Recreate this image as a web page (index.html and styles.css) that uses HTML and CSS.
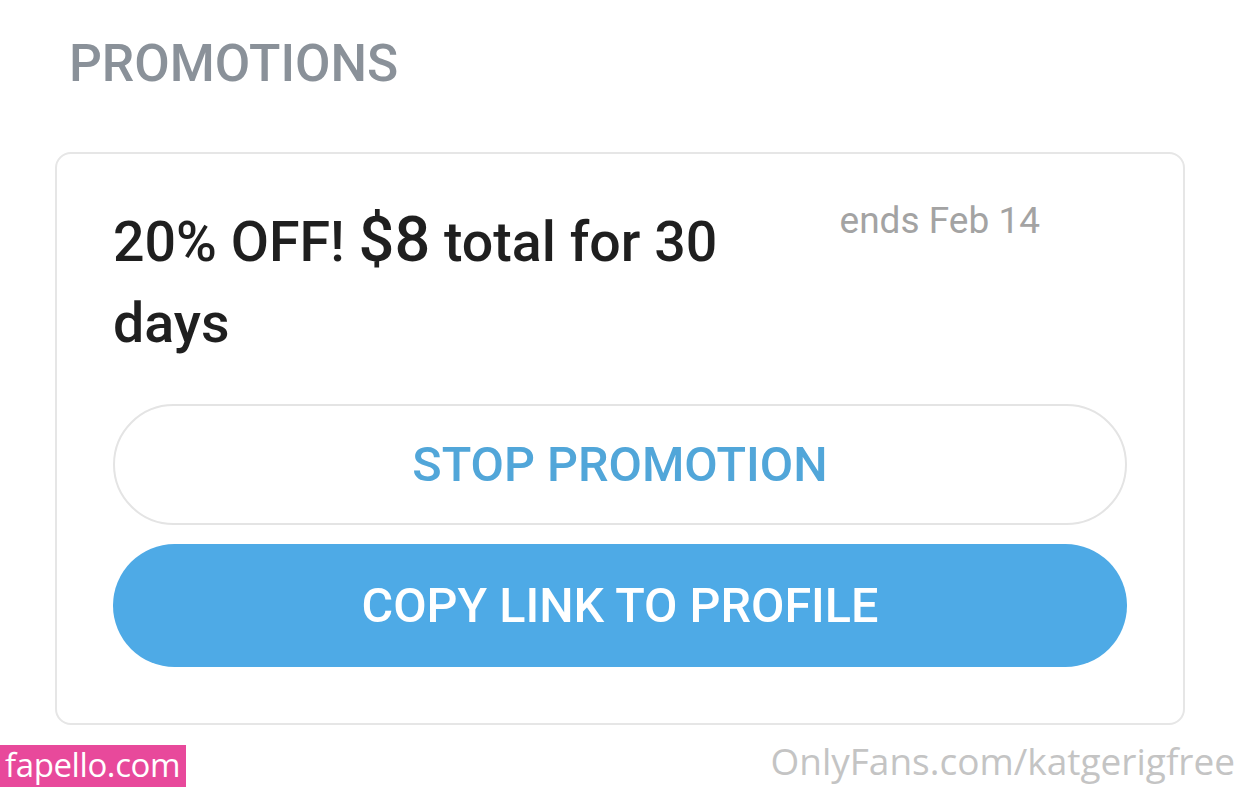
FILE: index.html
```html
<!DOCTYPE html>
<html lang="en">
<head>
<meta charset="utf-8">
<title>Promotions</title>
<link rel="stylesheet" href="styles.css">
</head>
<body>
<main class="page">
  <h1 class="heading">PROMOTIONS</h1>
  <section class="card">
    <div class="card-top">
      <p class="offer">20% OFF! <span class="price">$8</span> total for 30 days</p>
      <span class="ends">ends Feb 14</span>
    </div>
    <div class="actions">
      <button class="btn btn-outline" type="button">STOP PROMOTION</button>
      <button class="btn btn-primary" type="button">COPY LINK TO PROFILE</button>
    </div>
  </section>
</main>
<div class="wm-left">fapello.com</div>
<div class="wm-right">OnlyFans.com/katgerigfree</div>
</body>
</html>
```

FILE: styles.css
```css
* { box-sizing: border-box; }
html, body { margin: 0; padding: 0; background: #fff; }
body {
  width: 1241px;
  height: 787px;
  overflow: hidden;
  position: relative;
  font-family: Roboto, "Liberation Sans", sans-serif;
}
.page {
  padding: 33px 56px 0 55px;
}
.heading {
  margin: 0 0 57px 14px;
  font-size: 51.5px;
  line-height: 62px;
  font-weight: 500;
  color: #8a9199;
  letter-spacing: 0;
}
.card {
  width: 1130px;
  border: 2px solid #e6e6e6;
  border-radius: 16px;
  padding: 48px 56px 56px 56px;
}
.card-top {
  display: flex;
  align-items: flex-start;
}
.offer {
  flex: 1;
  margin: 0;
  font-size: 55.5px;
  line-height: 81px;
  font-weight: 500;
  color: #1f1f1f;
}
.price {
  font-size: 63px;
  line-height: 1;
}
.ends {
  margin: -3px 87px 0 40px;
  font-size: 37px;
  line-height: 44px;
  color: #a3a3a3;
  white-space: nowrap;
}
.actions {
  margin-top: 40px;
  display: flex;
  flex-direction: column;
  gap: 19px;
}
.btn {
  width: 100%;
  border-radius: 62px;
  font-family: Roboto, "Liberation Sans", sans-serif;
  font-size: 48.5px;
  font-weight: 500;
  cursor: pointer;
  padding: 0;
}
.btn-outline {
  height: 121px;
  background: #fff;
  border: 2px solid #e4e4e4;
  color: #51a6d9;
}
.btn-primary {
  height: 123px;
  background: #4eaae6;
  border: none;
  color: #fff;
}
.wm-left {
  position: absolute;
  left: 0;
  top: 745px;
  width: 186px;
  height: 42px;
  background: #e8499b;
  color: #fff;
  font-family: "Open Sans", sans-serif;
  font-size: 33px;
  line-height: 40px;
  padding-left: 5px;
  letter-spacing: -0.4px;
}
.wm-right {
  position: absolute;
  right: 6px;
  top: 737px;
  color: #c4c4c4;
  font-family: "Open Sans", sans-serif;
  font-size: 37px;
  line-height: 48px;
}
```
